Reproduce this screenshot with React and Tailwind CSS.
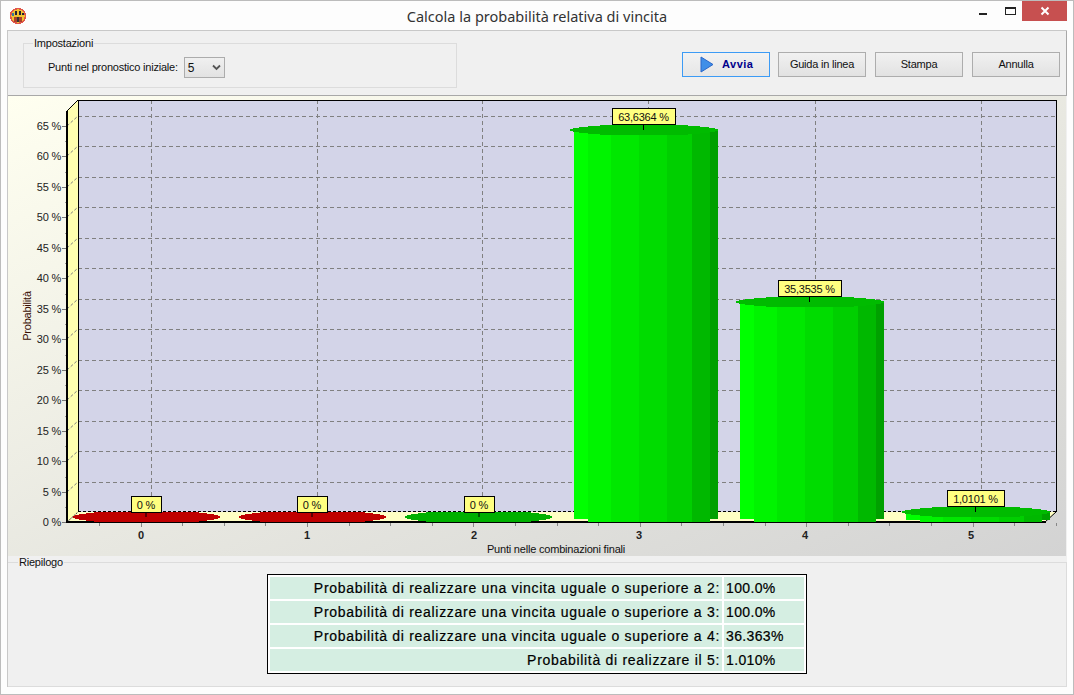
import React from 'react';

const SEGS = [
  [0, 14, '#00ff00'],
  [14, 37, '#00f400'],
  [37, 65, '#00e800'],
  [65, 93, '#00dc00'],
  [93, 118, '#00cf00'],
  [118, 136, '#00b800'],
  [136, 144, '#00a000'],
];

const LEVELS = [];
for (let i = 0; i <= 13; i++) LEVELS.push(i);

// stepped ellipse, the chart control draws it without smoothing
const discPoints = (x, w, y, h, k) => {
  const left = [];
  const right = [];
  for (let i = 0; i < h; i++) {
    const t = ((i + 0.5) / h) * 2 - 1;
    const half = (w / 2) * (1 - k * t * t);
    const a = Math.round(x + w / 2 - half);
    const b = Math.round(x + w / 2 + half);
    left.push(`${a},${y + i} ${a},${y + i + 1}`);
    right.unshift(`${b},${y + i + 1} ${b},${y + i}`);
  }
  return [...left, ...right].join(' ');
};

const Tip = ({ x, y, w, stem, text }) => (
  <g>
    <line x1={x + w / 2} x2={x + w / 2} y1={y + 16} y2={stem} stroke="#000" />
    <rect x={x + 0.5} y={y + 0.5} width={w} height={16} fill="#ffff80" stroke="#000" />
    <text x={x + w / 2} y={y + 12.5} textAnchor="middle" fontSize="11" fill="#111">{text}</text>
  </g>
);

const Cylinder = ({ x, top }) => (
  <g shapeRendering="crispEdges">
    {SEGS.map(([a, b, c], i) => (
      <rect key={i} x={x + a} y={top + 5} width={b - a} height={i === 0 || i === 6 ? 519 - top - 5 : 522 - top - 5} fill={c} />
    ))}
    <polygon points={discPoints(x - 4, 148, top, 10, 0.5)} fill="#00bb00" />
  </g>
);

const Chart = () => (
  <svg viewBox="8 96 1058 460" className="block w-[1058px] h-[460px]" style={{ fontFamily: '"Liberation Sans", sans-serif' }}>
    <defs>
      <linearGradient id="bgChart" x1="0" y1="0" x2="1" y2="1">
        <stop offset="0" stopColor="#fffff0" />
        <stop offset="1" stopColor="#d3d3d3" />
      </linearGradient>
    </defs>
    <rect x="8" y="96" width="1058" height="460" fill="url(#bgChart)" />

    {/* walls */}
    <rect x="78" y="100" width="978" height="412" fill="#d3d4e8" />
    <polygon points="67,111 78,100 78,512 67,522" fill="#ffffb0" />
    <polygon points="67,522 78,512 1056,512 1045,522" fill="#ffffc4" />

    {/* grid */}
    {LEVELS.slice(1).map(i => {
      const y = Math.round(522 - i * 30.46);
      return (
        <g key={i} stroke="#808080" strokeDasharray="4 3" shapeRendering="crispEdges">
          <line x1="78" x2="1056" y1={y - 9.5} y2={y - 9.5} />
        </g>
      );
    })}
    {LEVELS.slice(1).map(i => {
      const y = Math.round(522 - i * 30.46);
      return <line key={i} x1="67" y1={y} x2="78" y2={y - 10} stroke="#808080" strokeDasharray="3 2" />;
    })}
    <line x1="67" y1="522" x2="78" y2="512" stroke="#333" strokeDasharray="2 1" />
    {[151.5, 317.5, 482.5, 648.5, 815.5, 981.5].map(x => (
      <line key={x} x1={x} x2={x} y1="100" y2="512" stroke="#808080" strokeDasharray="4 3" shapeRendering="crispEdges" />
    ))}
    <line x1="78" x2="1056" y1="511.5" y2="511.5" stroke="#000" strokeDasharray="3 2" shapeRendering="crispEdges" />

    {/* frame */}
    <g stroke="#000" shapeRendering="crispEdges">
      <line x1="78" x2="1057" y1="100.5" y2="100.5" />
      <line x1="78.5" x2="78.5" y1="100" y2="512" />
      <line x1="1056.5" x2="1056.5" y1="100" y2="512" />
    </g>
    <line x1="67" y1="111" x2="78" y2="100" stroke="#000" />
    <line x1="1045" y1="522" x2="1056" y2="512" stroke="#000" />
    <rect x="66" y="111" width="2" height="412" fill="#000" />
    <rect x="66" y="521" width="980" height="2" fill="#000" />

    {/* y axis */}
    {LEVELS.map(i => {
      const y = Math.round(522 - i * 30.46);
      return (
        <g key={i}>
          <line x1="62" x2="66" y1={y + 0.5} y2={y + 0.5} stroke="#777" shapeRendering="crispEdges" />
          <text x="61" y={y + 4} textAnchor="end" fontSize="11" fill="#222">{i * 5} %</text>
          {i < 13 && <line x1="64.5" x2="66" y1={y - 15} y2={y - 15} stroke="#999" shapeRendering="crispEdges" />}
        </g>
      );
    })}

    {/* x axis */}
    {Array.from({ length: 24 }).map((_, i) => {
      const x = Math.round(99 + i * 41.6);
      return <line key={i} x1={x + 0.5} x2={x + 0.5} y1="523" y2={(i - 1) % 4 === 0 ? 527 : 526} stroke="#888" shapeRendering="crispEdges" />;
    })}
    {[141, 307, 474, 639, 805, 971].map((x, i) => (
      <text key={i} x={x} y="539" textAnchor="middle" fontSize="11" fontWeight="700" fill="#222">{i}</text>
    ))}
    <text x="556" y="553" textAnchor="middle" fontSize="11" letterSpacing="-0.2" fill="#111">Punti nelle combinazioni finali</text>
    <text transform="translate(31 316) rotate(-90)" textAnchor="middle" fontSize="11" fill="#3a1005">Probabilità</text>

    {/* flat values */}
    <g shapeRendering="crispEdges">
      <polygon points={discPoints(73, 147, 512, 10, 0.35)} fill="#c00000" />
      <polygon points={discPoints(239, 147, 512, 10, 0.35)} fill="#c00000" />
      <polygon points={discPoints(405, 147, 512, 10, 0.35)} fill="#00b000" />
    </g>

    <Cylinder x={574} top={125} />
    <Cylinder x={740} top={297} />
    <g shapeRendering="crispEdges">
      {SEGS.map(([a, b, c], i) => (
        <rect key={i} x={906 + a} y={512} width={b - a} height={i === 0 || i === 6 ? 8 : 10} fill={c} />
      ))}
      <polygon points={discPoints(902, 148, 507, 10, 0.5)} fill="#00bb00" />
    </g>

    <Tip x={131} y={496} w={30} stem={517} text="0 %" />
    <Tip x={297} y={496} w={30} stem={517} text="0 %" />
    <Tip x={464} y={496} w={30} stem={517} text="0 %" />
    <Tip x={612} y={108} w={63} stem={130} text="63,6364 %" />
    <Tip x={778} y={280} w={63} stem={302} text="35,3535 %" />
    <Tip x={947} y={490} w={57} stem={512} text="1,0101 %" />
  </svg>
);

const AppIcon = () => (
  <svg width="18" height="18" viewBox="0 0 18 18" shapeRendering="crispEdges">
    <circle cx="9" cy="9" r="7.5" fill="#f2c230" stroke="#e0564a" strokeWidth="1.6" />
    <rect x="3" y="6" width="2" height="3" fill="#3a7f9a" />
    <rect x="6" y="4" width="2" height="4" fill="#223" />
    <rect x="10" y="4" width="2" height="4" fill="#223" />
    <rect x="13" y="6" width="2" height="2" fill="#223" />
    <rect x="5" y="10" width="8" height="5" fill="#a8402c" />
    <rect x="8" y="10" width="2" height="5" fill="#333" />
  </svg>
);

const Btn = ({ children }) => (
  <button className="w-[88px] h-[25px] border border-[#adadad] bg-gradient-to-b from-[#f1f1f1] to-[#e2e2e2] text-[11px] tracking-[-0.22px] text-[#111] flex items-center justify-center">
    {children}
  </button>
);

const ROWS = [
  ['Probabilità di realizzare una vincita uguale o superiore a 2:', '100.0%'],
  ['Probabilità di realizzare una vincita uguale o superiore a 3:', '100.0%'],
  ['Probabilità di realizzare una vincita uguale o superiore a 4:', '36.363%'],
  ['Probabilità di realizzare il 5:', '1.010%'],
];

export default function App() {
  return (
    <div className="w-[1074px] h-[695px] bg-[#fdfdfd] border border-[#bcbcbc] flex flex-col overflow-hidden text-[11px] tracking-[-0.22px] text-[#111]" style={{ fontFamily: '"Liberation Sans", sans-serif' }}>
      {/* title bar */}
      <div className="h-[29px] shrink-0 grid grid-cols-[1fr_auto_1fr] items-start">
        <div className="ml-[8px] mt-[6px]"><AppIcon /></div>
        <div className="text-center text-[14.5px] tracking-normal leading-[30px] text-[#333]" style={{ fontFamily: '"Noto Sans", sans-serif' }}>
          Calcola la probabilità relativa di vincita
        </div>
        <div className="flex items-start justify-end mr-[6px]">
          <div className="w-[8px] h-[2px] bg-[#222] mt-[12px] mr-[18px]" />
          <div className="w-[11px] h-[8px] border border-[#222] border-t-2 mt-[6px] mr-[6px]" />
          <div className="w-[45px] h-[20px] bg-[#c75050] flex items-center justify-center">
            <svg width="10" height="10" viewBox="0 0 10 10"><path d="M1.5 1.5 L8.5 8.5 M8.5 1.5 L1.5 8.5" stroke="#fff" strokeWidth="2" /></svg>
          </div>
        </div>
      </div>

      <div className="ml-[6px] w-[1060px] h-[657px] border-l border-t border-[#c8c8c8] flex flex-col bg-[#f0f0f0]">
        {/* settings */}
        <div className="h-[65px] shrink-0 border-b border-r border-[#a8a8a8] flex items-start">
          <fieldset className="ml-[15px] mt-[6px] w-[434px] h-[51px] border border-[#dcdcdc] px-[9px]">
            <legend className="px-[1px] leading-[12px]">Impostazioni</legend>
            <div className="flex items-center ml-[15px] mt-[8px]">
              <span>Punti nel pronostico iniziale:</span>
              <div className="ml-[6px] w-[41px] h-[21px] border border-[#acacac] bg-gradient-to-b from-[#f0f0f0] to-[#e2e2e2] flex items-center justify-between pl-[3px] pr-[3px] text-[12px]">
                5
                <svg width="9" height="7" viewBox="0 0 9 7"><path d="M1 1.5 L4.5 5 L8 1.5" fill="none" stroke="#555" strokeWidth="1.8" /></svg>
              </div>
            </div>
          </fieldset>
          <div className="ml-auto mt-[21px] mr-[6px] flex gap-[9px]">
            <button className="w-[88px] h-[25px] -mr-[1px] border border-[#3c9bf5] bg-gradient-to-b from-[#f2f2f2] to-[#e6e6e6] flex items-center text-[11px] font-bold text-[#00008b] tracking-[0.5px]">
              <svg width="14" height="17" viewBox="0 0 14 17" className="ml-[17px] mr-[8px]">
                <path d="M1 1 L13 8.5 L1 16 Z" fill="#3f8fe8" stroke="#2a66c8" />
              </svg>
              Avvia
            </button>
            <Btn>Guida in linea</Btn>
            <Btn>Stampa</Btn>
            <Btn>Annulla</Btn>
          </div>
        </div>

        <Chart />

        {/* summary */}
        <div className="flex-1 flex flex-col items-start">
          <fieldset className="flex-1 w-full border-t border-r border-b border-[#dcdcdc]">
            <legend className="ml-[10px] px-[1px] leading-[12px]">Riepilogo</legend>
            <div className="ml-[259px] mt-[6px] w-[540px] border border-black bg-white p-[2px] flex flex-col gap-[2px] text-[14px] text-black [-webkit-text-stroke:0.2px_black]">
              {ROWS.map(([label, value], i) => (
                <div key={i} className="flex gap-[2px] h-[22px] leading-[22px]">
                  <div className="w-[452px] bg-[#d5eee2] text-right pr-[2px] whitespace-nowrap tracking-[0.7px]">{label}</div>
                  <div className="flex-1 bg-[#d5eee2] pl-[2px] tracking-[0.35px]">{value}</div>
                </div>
              ))}
            </div>
          </fieldset>
        </div>
      </div>
    </div>
  );
}
